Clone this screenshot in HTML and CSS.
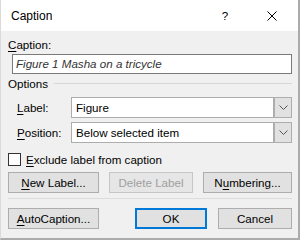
FILE: index.html
```html
<!DOCTYPE html>
<html lang="en">
  <head>
    <meta charset="UTF-8" />
    <title>Caption</title>
    <link rel="stylesheet" href="styles.css">
  </head>
  <body>
    <div class="dialog">
      <div class="titlebar">
        <span class="title">Caption</span>
        <span class="help">?</span>
        <span class="close">
          <svg width="10" height="10" viewBox="0 0 10 10" fill="none" stroke="#000" stroke-width="1">
            <path d="M0.5 0.5 9.5 9.5" />
            <path d="M9.5 0.5 0.5 9.5" />
          </svg>
        </span>
      </div>
      <div class="content">
        <label class="field-label"><u>C</u>aption:</label>
        <div class="text-input">Figure 1 Masha on a tricycle</div>

        <div class="group-head">
          <span>Options</span>
          <span class="rule"></span>
        </div>

        <div class="row">
          <label class="row-label"><u>L</u>abel:</label>
          <div class="select">
            <span class="value">Figure</span>
            <span class="arrow">
              <svg width="9" height="5" viewBox="0 0 9 5" fill="none" stroke="#555" stroke-width="1">
                <path d="M0.5 0.5 4.5 4.5 8.5 0.5" />
              </svg>
            </span>
          </div>
        </div>
        <div class="row row-second">
          <label class="row-label"><u>P</u>osition:</label>
          <div class="select">
            <span class="value">Below selected item</span>
            <span class="arrow">
              <svg width="9" height="5" viewBox="0 0 9 5" fill="none" stroke="#555" stroke-width="1">
                <path d="M0.5 0.5 4.5 4.5 8.5 0.5" />
              </svg>
            </span>
          </div>
        </div>

        <div class="check">
          <span class="box"></span>
          <span><u>E</u>xclude label from caption</span>
        </div>

        <div class="btn-row spread">
          <button class="btn btn-new"><u>N</u>ew Label...</button>
          <button class="btn btn-delete" disabled>Delete Label</button>
          <button class="btn btn-number">N<u>u</u>mbering...</button>
        </div>

        <div class="sep"></div>

        <div class="btn-row bottom">
          <button class="btn btn-auto"><u>A</u>utoCaption...</button>
          <button class="btn btn-ok">OK</button>
          <button class="btn btn-cancel">Cancel</button>
        </div>
      </div>
    </div>
  </body>
</html>
```

FILE: styles.css
```css
* {
  margin: 0;
  padding: 0;
  box-sizing: border-box;
}

body {
  font-family: "Segoe UI", "Liberation Sans", sans-serif;
  font-size: 11.6px;
  color: #000;
  background: #f0f0f0;
}

u {
  text-decoration: underline;
  text-underline-offset: 2px;
}

.dialog {
  width: 300px;
  height: 240px;
  background: #f0f0f0;
  border-left: 1px solid #dadada;
  border-right: 2px solid #ababab;
  border-bottom: 2px solid #ababab;
  display: flex;
  flex-direction: column;
}

/* title bar */
.titlebar {
  height: 31px;
  background: #fff;
  display: flex;
  align-items: center;
  padding-left: 10px;
}
.title {
  flex: 1;
  font-size: 12px;
}
.help {
  width: 10px;
  text-align: center;
  margin-right: 37px;
}
.close {
  display: flex;
  margin-right: 21px;
}

/* body */
.content {
  padding: 6px 6px 0 7px;
  display: flex;
  flex-direction: column;
}

.field-label {
  line-height: 15px;
  height: 15px;
}

.text-input {
  margin: 2px 0 0 4px;
  height: 20px;
  border: 1px solid #7a7a7a;
  background: #fff;
  color: #333;
  font-style: italic;
  padding-left: 3px;
  line-height: 18px;
}

.group-head {
  margin-top: 2px;
  height: 15px;
  display: flex;
  align-items: center;
  gap: 6px;
}
.group-head .rule {
  flex: 1;
  height: 1px;
  background: #d7d7d7;
}

.row {
  margin-top: 6px;
  display: flex;
  align-items: center;
  padding-left: 9px;
}
.row-second {
  margin-top: 4px;
}
.row-label {
  width: 54px;
}

.select {
  flex: 1;
  height: 21px;
  border: 1px solid #adadad;
  background: #fff;
  display: flex;
  align-items: stretch;
}
.select .value {
  flex: 1;
  padding-left: 4px;
  line-height: 19px;
}
.select .arrow {
  width: 18px;
  background: #e1e1e1;
  border-left: 2px solid #adadad;
  display: flex;
  align-items: center;
  justify-content: center;
}

.check {
  margin-top: 9px;
  height: 15px;
  display: flex;
  align-items: center;
  gap: 5px;
}
.check .box {
  width: 13px;
  height: 13px;
  border: 1px solid #333;
  background: #fff;
}

.btn-row {
  display: flex;
}
.spread {
  margin-top: 5px;
  justify-content: space-between;
}
.bottom {
  margin-top: 9px;
  gap: 11px;
}

.btn {
  height: 21px;
  font-family: inherit;
  font-size: 11.6px;
  color: #000;
  background: #e1e1e1;
  border: 1px solid #adadad;
}
.btn:disabled {
  color: #a0a0a0;
  background: #e6e6e6;
  border-color: #c6c6c6;
}
.btn-new,
.btn-auto {
  width: 91px;
}
.btn-delete {
  width: 84px;
}
.btn-number {
  width: 89px;
}
.btn-ok {
  width: 72px;
  margin-left: auto;
  border: 2px solid #0078d7;
}
.btn-cancel {
  width: 74px;
}

.sep {
  margin-top: 5px;
  height: 1px;
  background: #dcdcdc;
}
```
